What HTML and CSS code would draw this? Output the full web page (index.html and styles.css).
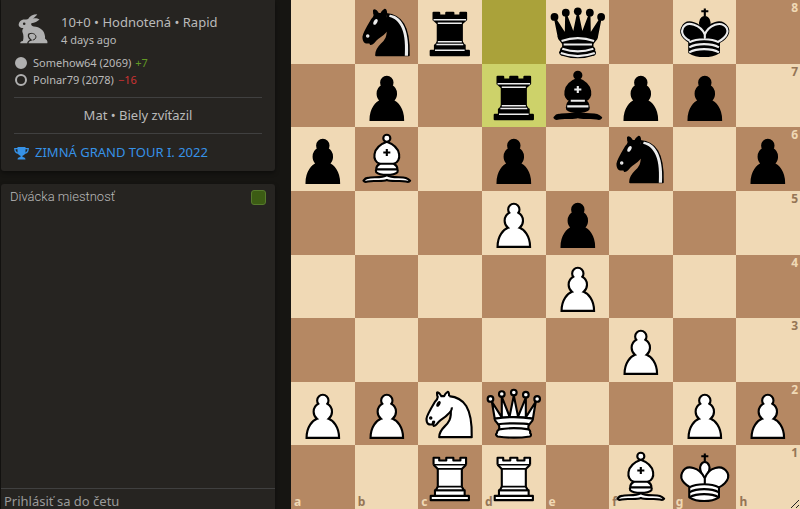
FILE: index.html
```html
<!DOCTYPE html>
<html lang="sk">
<head>
  <meta charset="UTF-8">
  <meta name="viewport" content="width=device-width, initial-scale=1.0">
  <title>10+0 • Hodnotená • Rapid</title>
  <link rel="stylesheet" href="styles.css">
</head>
<body>
  <!-- Piece set -->
  <svg class="sprite" aria-hidden="true">
    <symbol id="pawn" viewBox="0 0 45 45">
      <path d="M22.5 9c-2.21 0-4 1.79-4 4 0 .89.29 1.71.78 2.38C17.33 16.5 16 18.59 16 21c0 2.03.94 3.84 2.41 5.03-3 1.06-7.41 5.55-7.41 13.47h23c0-7.92-4.41-12.41-7.41-13.47 1.47-1.19 2.41-3 2.41-5.03 0-2.41-1.33-4.5-3.28-5.62.49-.67.78-1.49.78-2.38 0-2.21-1.79-4-4-4z" stroke-linejoin="miter"/>
    </symbol>
    <symbol id="white-knight" viewBox="0 0 45 45">
      <path d="M22 10c10.5 1 16.5 8 16 29H15c0-9 10-6.5 8-21"/>
      <path d="M24 18c.38 2.91-5.55 7.37-8 9-3 2-2.82 4.34-5 4-1.042-.94 1.41-3.04 0-3-1 0 .19 1.23-1 2-1 0-4.003 1-4-4 0-2 6-12 6-12s1.89-1.9 2-3.5c-.73-.994-.5-2-.5-3 1-1 3 2.5 3 2.5h2s.78-1.992 2.5-3c1 0 1 3 1 3"/>
      <path d="M9.5 25.5a.5.5 0 1 1-1 0 .5.5 0 1 1 1 0zm5.433-9.75a.5 1.5 30 1 1-.866-.5.5 1.5 30 1 1 .866.5z" fill="#000"/>
    </symbol>
    <symbol id="black-knight" viewBox="0 0 45 45">
      <path d="M22 10c10.5 1 16.5 8 16 29H15c0-9 10-6.5 8-21"/>
      <path d="M24 18c.38 2.91-5.55 7.37-8 9-3 2-2.82 4.34-5 4-1.042-.94 1.41-3.04 0-3-1 0 .19 1.23-1 2-1 0-4.003 1-4-4 0-2 6-12 6-12s1.89-1.9 2-3.5c-.73-.994-.5-2-.5-3 1-1 3 2.5 3 2.5h2s.78-1.992 2.5-3c1 0 1 3 1 3"/>
      <path d="M9.5 25.5a.5.5 0 1 1-1 0 .5.5 0 1 1 1 0zm5.433-9.75a.5 1.5 30 1 1-.866-.5.5 1.5 30 1 1 .866.5z" fill="#ececec" stroke="#ececec"/>
      <path d="M24.55 10.4l-.45 1.45.5.15c3.15 1 5.65 2.49 7.9 6.75S35.75 29.06 35.25 39l-.05.5h2.25l.05-.5c.5-10.06-.88-16.85-3.25-21.34-2.37-4.49-5.79-6.64-9.19-7.16l-.51-.1z" fill="#ececec" stroke="none"/>
    </symbol>
    <symbol id="white-bishop" viewBox="0 0 45 45">
      <path d="M9 36c3.39-.97 10.11.43 13.5-2 3.39 2.43 10.11 1.03 13.5 2 0 0 1.65.54 3 2-.68.97-1.65.99-3 .5-3.39-.97-10.11.46-13.5-1-3.39 1.46-10.11.03-13.5 1-1.354.49-2.323.47-3-.5 1.354-1.94 3-2 3-2z"/>
      <path d="M15 32c2.5 2.5 12.5 2.5 15 0 .5-1.5 0-2 0-2 0-2.5-2.5-4-2.5-4 5.5-1.5 6-11.5-5-15.5-11 4-10.5 14-5 15.5 0 0-2.5 1.5-2.5 4 0 0-.5.5 0 2z"/>
      <path d="M25 8a2.5 2.5 0 1 1-5 0 2.5 2.5 0 1 1 5 0z"/>
      <path d="M17.5 26h10M15 30h15m-7.5-14.5v5M20 18h5" fill="none"/>
    </symbol>
    <symbol id="black-bishop" viewBox="0 0 45 45">
      <path d="M9 36c3.39-.97 10.11.43 13.5-2 3.39 2.43 10.11 1.03 13.5 2 0 0 1.65.54 3 2-.68.97-1.65.99-3 .5-3.39-.97-10.11.46-13.5-1-3.39 1.46-10.11.03-13.5 1-1.354.49-2.323.47-3-.5 1.354-1.94 3-2 3-2z"/>
      <path d="M15 32c2.5 2.5 12.5 2.5 15 0 .5-1.5 0-2 0-2 0-2.5-2.5-4-2.5-4 5.5-1.5 6-11.5-5-15.5-11 4-10.5 14-5 15.5 0 0-2.5 1.5-2.5 4 0 0-.5.5 0 2z"/>
      <path d="M25 8a2.5 2.5 0 1 1-5 0 2.5 2.5 0 1 1 5 0z"/>
      <path d="M17.5 26h10M15 30h15m-7.5-14.5v5M20 18h5" fill="none" stroke="#ececec"/>
    </symbol>
    <symbol id="white-rook" viewBox="0 0 45 45">
      <path d="M9 39h27v-3H9v3zm3-3v-4h21v4H12zm-1-22V9h4v2h5V9h5v2h5V9h4v5"/>
      <path d="M34 14l-3 3H14l-3-3"/>
      <path d="M31 17v12.5H14V17"/>
      <path d="M31 29.5l1.5 2.5h-20l1.5-2.5"/>
      <path d="M11 14h23M14 17h17M14 29.500h17" fill="none" stroke-width="1"/>
    </symbol>
    <symbol id="black-rook" viewBox="0 0 45 45">
      <path d="M9 39h27v-3H9v3zm3.5-7l1.5-2.5h17l1.5 2.5h-20zm-.5 4v-4h21v4H12z"/>
      <path d="M14 29.5v-13h17v13H14z"/>
      <path d="M14 16.5L11 14h23l-3 2.5H14zM11 14V9h4v2h5V9h5v2h5V9h4v5H11z"/>
      <path d="M12 35.5h21m-20-4h19m-18-2h17m-17-13h17M11 14h23" fill="none" stroke="#ececec" stroke-width="1"/>
    </symbol>
    <symbol id="white-queen" viewBox="0 0 45 45">
      <path d="M8 12a2 2 0 1 1-4 0 2 2 0 1 1 4 0zm16.5-4.5a2 2 0 1 1-4 0 2 2 0 1 1 4 0zM41 12a2 2 0 1 1-4 0 2 2 0 1 1 4 0zM16 8.5a2 2 0 1 1-4 0 2 2 0 1 1 4 0zM33 9a2 2 0 1 1-4 0 2 2 0 1 1 4 0z"/>
      <path d="M9 26c8.5-1.5 21-1.5 27 0l2-12-7 11V11l-5.5 13.5-3-15-3 15-5.5-14V25L7 14l2 12z"/>
      <path d="M9 26c0 2 1.5 2 2.5 4 1 1.5 1 1 .5 3.5-1.5 1-1.5 2.5-1.5 2.5-1.5 1.5.5 2.5.5 2.5 6.5 1 16.5 1 23 0 0 0 1.5-1 0-2.5 0 0 .5-1.5-1-2.5-.5-2.5-.5-2 .5-3.5 1-2 2.5-2 2.5-4-8.5-1.5-18.5-1.5-27 0z"/>
      <path d="M11.5 30c3.5-1 18.5-1 22 0M12 33.5c6-1 15-1 21 0" fill="none"/>
    </symbol>
    <symbol id="black-queen" viewBox="0 0 45 45">
      <g stroke="none">
        <circle cx="6" cy="12" r="2.75"/>
        <circle cx="14" cy="9" r="2.75"/>
        <circle cx="22.5" cy="8" r="2.75"/>
        <circle cx="31" cy="9" r="2.75"/>
        <circle cx="39" cy="12" r="2.75"/>
      </g>
      <path d="M9 26c8.5-1.5 21-1.5 27 0l2.5-12.5L31 25l-.3-14.1-5.2 13.6-3-14.5-3 14.5-5.2-13.6L14 25 6.5 13.5 9 26z"/>
      <path d="M9 26c0 2 1.5 2 2.5 4 1 1.5 1 1 .5 3.5-1.5 1-1.5 2.5-1.5 2.5-1.5 1.5.5 2.5.5 2.5 6.5 1 16.5 1 23 0 0 0 1.5-1 0-2.5 0 0 .5-1.5-1-2.5-.5-2.5-.5-2 .5-3.5 1-2 2.5-2 2.5-4-8.5-1.5-18.5-1.5-27 0z"/>
      <path d="M11 38.5a35 35 1 0 0 23 0" fill="none"/>
      <path d="M11 29a35 35 1 0 1 23 0m-21.5 2.5h20m-21 3a35 35 1 0 0 22 0m-23 3a35 35 1 0 0 24 0" fill="none" stroke="#ececec"/>
    </symbol>
    <symbol id="white-king" viewBox="0 0 45 45">
      <path d="M22.5 11.63V6M20 8h5" fill="none"/>
      <path d="M22.5 25s4.5-7.5 3-10.5c0 0-1-2.5-3-2.5s-3 2.5-3 2.5c-1.5 3 3 10.5 3 10.5"/>
      <path d="M11.5 37c5.5 3.5 15.5 3.5 21 0v-7s9-4.5 6-10.5c-4-6.5-13.5-3.5-16 4V27v-3.5c-3.5-7.5-13-10.5-16-4-3 6 5 10 5 10V37z"/>
      <path d="M11.5 30c5.5-3 15.5-3 21 0m-21 3.5c5.5-3 15.5-3 21 0m-21 3.5c5.5-3 15.5-3 21 0" fill="none"/>
    </symbol>
    <symbol id="black-king" viewBox="0 0 45 45">
      <path d="M22.5 11.63V6M20 8h5" fill="none"/>
      <path d="M22.5 25s4.5-7.5 3-10.5c0 0-1-2.5-3-2.5s-3 2.5-3 2.5c-1.5 3 3 10.5 3 10.5"/>
      <path d="M11.5 37c5.5 3.5 15.5 3.5 21 0v-7s9-4.5 6-10.5c-4-6.5-13.5-3.5-16 4V27v-3.5c-3.5-7.5-13-10.5-16-4-3 6 5 10 5 10V37z"/>
      <path d="M32 29.5s8.5-4 6.03-9.65C34.15 14 25 18 22.5 24.5l.01 2.1-.01-2.1C20 18 9.906 14 6.997 19.85c-2.497 5.65 4.853 9 4.853 9M11.5 30c5.5-3 15.5-3 21 0m-21 3.5c5.5-3 15.5-3 21 0m-21 3.5c5.5-3 15.5-3 21 0" fill="none" stroke="#ececec"/>
    </symbol>
  </svg>

  <main class="round">
    <aside class="side">
      <section class="game-meta">
        <div class="infos">
          <svg class="rabbit" viewBox="52 40 92 94" aria-hidden="true">
            <path fill="currentColor" fill-rule="evenodd" d="M54 73C55 66 60 60 68 58C75 57 80 58 83 56C88 48 98 42 111 42C108 47 103 52 97 55C104 53 111 53 118 58C112 64 103 68 93 69C91 74 94 78 100 79C119 80 134 91 135 111C135 115 134 118 138 119C142 121 143 127 142 131H59C58 127 62 125 67 124C70 115 69 105 66 98C64 92 66 87 69 84C62 84 54 81 54 73ZM75 71A4 4 0 1 0 67 71A4 4 0 1 0 75 71Z"/>
            <path d="M83 134C80 127 86 123 92 121C84 114 81 106 87 101" fill="none" stroke="#262421" stroke-width="4"/>
            <path d="M85 103C94 97 107 102 107 111C107 116 103 120 97 121" fill="none" stroke="#262421" stroke-width="3"/>
          </svg>
          <div class="infos-text">
            <h1 class="setup">10+0 • Hodnotená • Rapid</h1>
            <time class="date">4 days ago</time>
          </div>
        </div>
        <ul class="players">
          <li class="player white">Somehow64 (2069) <span class="good">+7</span></li>
          <li class="player black">Polnar79 (2078) <span class="bad">−16</span></li>
        </ul>
        <p class="status">Mat • Biely zvíťazil</p>
        <a class="tournament" href="#">
          <svg class="trophy" viewBox="0 0 15 14" aria-hidden="true">
            <path fill="currentColor" d="M3.500 1h8v5c0 2-1.500 3.200-3 3.700V11c1.800.2 3 .9 3 2.500h-8c0-1.600 1.200-2.300 3-2.500V9.700C5 9.200 3.500 8 3.500 6z"/>
            <path d="M4 2.700H.8C.8 5.500 2 7 4.800 7.300M11 2.700h3.200c0 2.800-1.200 4.300-4 4.600" fill="none" stroke="currentColor" stroke-width="1.300"/>
          </svg>
          ZIMNÁ GRAND TOUR I. 2022
        </a>
      </section>

      <section class="chat">
        <div class="chat-head">
          <label for="chat-toggle">Divácka miestnosť</label>
          <input class="chat-toggle" id="chat-toggle" type="checkbox" checked>
        </div>
        <div class="messages"></div>
        <input class="chat-say" type="text" placeholder="Prihlásiť sa do četu" aria-label="Prihlásiť sa do četu">
      </section>
    </aside>

    <div class="board" id="board">
      <svg class="resize" viewBox="0 0 10 10" aria-hidden="true">
        <path d="M1 9L9 1M6 9l3-3" fill="none" stroke="#222" stroke-width="1"/>
      </svg>
    </div>
  </main>

  <script src="script.js"></script>
</body>
</html>
```

FILE: styles.css
```css
* {
  margin: 0;
  padding: 0;
  box-sizing: border-box;
}

body {
  font-family: "Noto Sans", sans-serif;
  font-size: 13px;
  background: #161512;
  color: #bababa;
}

.sprite {
  display: none;
}

.round {
  display: flex;
  gap: 16px;
  height: 100vh;
  padding-left: 1px;
  overflow: hidden;
}

/* Side column */
.side {
  flex: 1;
  min-width: 0;
  display: flex;
  flex-direction: column;
  gap: 13px;
}

.game-meta,
.chat {
  background: #262421;
  box-shadow: 0 2px 4px rgba(0, 0, 0, 0.4);
}

.game-meta {
  padding: 12px 13px 9px;
  border-radius: 0 0 3px 3px;
}

.infos {
  display: flex;
  gap: 13px;
  padding-left: 4px;
}

.rabbit {
  width: 30px;
  height: 32px;
  margin-top: 1px;
  color: #b0b0b0;
}

.setup {
  font-size: 13px;
  font-weight: 400;
  line-height: 20px;
}

.date {
  display: block;
  font-size: 11px;
  line-height: 16px;
}

.players {
  list-style: none;
  padding: 6px 0 9px;
  font-size: 11px;
  line-height: 17px;
}

.player {
  display: flex;
  align-items: center;
  gap: 4px;
}

.player::before {
  content: "";
  box-sizing: border-box;
  width: 12px;
  height: 12px;
  margin: 0 2px 0 1px;
  border: 2px solid #b0b0b0;
  border-radius: 50%;
}

.player.white::before {
  background: #b0b0b0;
}

.good {
  color: #629924;
}

.bad {
  color: #cc3333;
}

.status {
  padding: 8px 0;
  border: solid #404040;
  border-width: 1px 0;
  line-height: 19px;
  text-align: center;
}

.tournament {
  display: flex;
  align-items: center;
  gap: 6px;
  padding-top: 9px;
  line-height: 19px;
  color: #3692e7;
  text-decoration: none;
}

.trophy {
  width: 15px;
  height: 14px;
}

/* Chat */
.chat {
  flex: 1;
  display: flex;
  flex-direction: column;
  border-radius: 3px 3px 0 0;
}

.chat-head {
  display: flex;
  align-items: center;
  justify-content: space-between;
  padding: 0 9px;
  font-family: Roboto, sans-serif;
  font-size: 13px;
  font-weight: 300;
  line-height: 26px;
}

.chat-toggle {
  appearance: none;
  width: 15px;
  height: 15px;
  background: #3c5c14;
  border: 1px solid #567a2c;
  border-radius: 3px;
}

.messages {
  flex: 1;
}

.chat-say {
  width: 100%;
  height: 21px;
  padding: 4px 3px 0;
  background: transparent;
  border: 0;
  border-top: 1px solid #404040;
  color: #bababa;
  font-family: inherit;
  font-size: 13px;
  line-height: 16px;
  outline: none;
}

.chat-say::placeholder {
  color: #999;
}

/* Board */
.board {
  position: relative;
  display: grid;
  grid-template-columns: repeat(8, 1fr);
  grid-template-rows: repeat(8, 1fr);
  height: 100%;
  aspect-ratio: 1;
}

.square {
  position: relative;
  min-width: 0;
  min-height: 0;
  color: #f0d9b5;
  background: #b58863;
}

.square.light {
  color: #957555;
  background: #f0d9b5;
}

.square.last-move {
  background: #aaa23a;
}

.square.light.last-move {
  background: #cdd26a;
}

.piece {
  position: relative;
  display: block;
  width: 100%;
  height: 100%;
  stroke: #000;
  stroke-width: 1.5;
  stroke-linejoin: round;
}

.piece.white {
  fill: #fff;
}

.piece.black {
  fill: #000;
}

.rank,
.file {
  position: absolute;
  font-size: 12px;
  font-weight: 700;
  line-height: 14px;
}

.rank {
  top: 1px;
  right: 2px;
}

.file {
  bottom: 0;
  left: 3px;
}

.resize {
  position: absolute;
  right: 0;
  bottom: 0;
  width: 10px;
  height: 10px;
}
```

FILE: script.js
```javascript
const fen = "1nr1q1k1/1p1rbpp1/pB1p1n1p/3Pp3/4P3/5P2/PPNQ2PP/2RR1BK1";
const lastMove = ["d8", "d7"];
const names = { p: "pawn", n: "knight", b: "bishop", r: "rook", q: "queen", k: "king" };
const board = document.getElementById("board");

let html = "";
fen.split("/").forEach((row, y) => {
  const cells = row.replace(/\d/g, n => " ".repeat(n));

  [...cells].forEach((char, x) => {
    const file = "abcdefgh"[x];
    const rank = 8 - y;
    let classes = "square";
    if ((x + y) % 2 === 0) classes += " light";
    if (lastMove.includes(file + rank)) classes += " last-move";

    html += `<div class="${classes}">`;
    if (x === 7) html += `<span class="rank">${rank}</span>`;
    if (y === 7) html += `<span class="file">${file}</span>`;
    if (char !== " ") {
      const color = char === char.toUpperCase() ? "white" : "black";
      const name = names[char.toLowerCase()];
      const id = name === "pawn" ? name : `${color}-${name}`;
      html += `<svg class="piece ${color}" role="img" aria-label="${color} ${name}"><use href="#${id}"/></svg>`;
    }
    html += "</div>";
  });
});

board.insertAdjacentHTML("afterbegin", html);
```
